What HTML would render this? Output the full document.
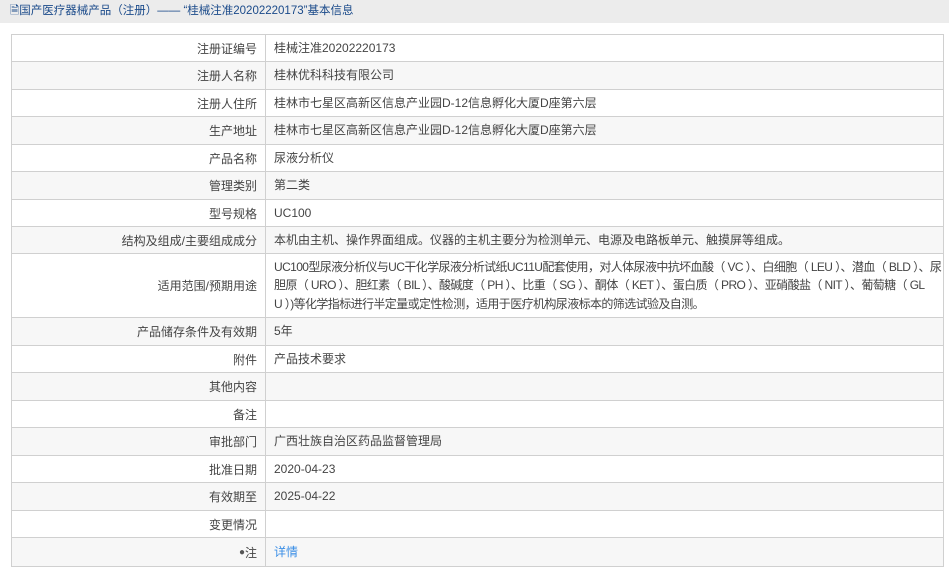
<!DOCTYPE html>
<html><head><meta charset="utf-8"><style>
body{margin:0;background:#fff;font-family:"Liberation Sans","Noto Sans CJK SC",sans-serif;font-size:12px;color:#333;width:949px;height:573px;overflow:hidden}
.hd{height:23px;background:#ececec;line-height:22px;padding-left:10px;color:#1a4a8a;font-size:11.5px}
.g{position:absolute;left:11px;top:34px;width:931px;border:1px solid #d0d0d0;border-bottom:none}
.r{display:flex;border-bottom:1px solid #d0d0d0;box-sizing:border-box}
.r:nth-child(even){background:#f7f7f7}
.l{width:254px;flex:0 0 254px;border-right:1px solid #d0d0d0;text-align:right;padding-right:8px;box-sizing:border-box;display:flex;align-items:center;justify-content:flex-end;color:#444}
.v{padding-left:8px;display:flex;align-items:center;color:#444;line-height:18.5px;padding-right:4px;white-space:nowrap;overflow:hidden}
</style></head><body>
<div class="hd">🗎国产医疗器械产品（注册）—— “桂械注准20202220173”基本信息</div>
<div class="g">
<div class="r" style="height:27px"><div class="l">注册证编号</div><div class="v">桂械注准20202220173</div></div>
<div class="r" style="height:28px"><div class="l">注册人名称</div><div class="v">桂林优科科技有限公司</div></div>
<div class="r" style="height:27px"><div class="l">注册人住所</div><div class="v">桂林市七星区高新区信息产业园D-12信息孵化大厦D座第六层</div></div>
<div class="r" style="height:28px"><div class="l">生产地址</div><div class="v">桂林市七星区高新区信息产业园D-12信息孵化大厦D座第六层</div></div>
<div class="r" style="height:27px"><div class="l">产品名称</div><div class="v">尿液分析仪</div></div>
<div class="r" style="height:28px"><div class="l">管理类别</div><div class="v">第二类</div></div>
<div class="r" style="height:27px"><div class="l">型号规格</div><div class="v">UC100</div></div>
<div class="r" style="height:27px"><div class="l">结构及组成/主要组成成分</div><div class="v">本机由主机、操作界面组成。仪器的主机主要分为检测单元、电源及电路板单元、触摸屏等组成。</div></div>
<div class="r" style="height:64px"><div class="l">适用范围/预期用途</div><div class="v" style="letter-spacing:-0.6px">UC100型尿液分析仪与UC干化学尿液分析试纸UC11U配套使用，对人体尿液中抗坏血酸（ VC ）、白细胞（ LEU ）、潜血（ BLD ）、尿<br>胆原（ URO ）、胆红素（ BIL ）、酸碱度（ PH ）、比重（ SG ）、酮体（ KET ）、蛋白质（ PRO ）、亚硝酸盐（ NIT ）、葡萄糖（ GL<br>U ）)等化学指标进行半定量或定性检测，适用于医疗机构尿液标本的筛选试验及自测。</div></div>
<div class="r" style="height:28px"><div class="l">产品储存条件及有效期</div><div class="v">5年</div></div>
<div class="r" style="height:27px"><div class="l">附件</div><div class="v">产品技术要求</div></div>
<div class="r" style="height:28px"><div class="l">其他内容</div><div class="v"></div></div>
<div class="r" style="height:27px"><div class="l">备注</div><div class="v"></div></div>
<div class="r" style="height:28px"><div class="l">审批部门</div><div class="v">广西壮族自治区药品监督管理局</div></div>
<div class="r" style="height:27px"><div class="l">批准日期</div><div class="v">2020-04-23</div></div>
<div class="r" style="height:28px"><div class="l">有效期至</div><div class="v">2025-04-22</div></div>
<div class="r" style="height:27px"><div class="l">变更情况</div><div class="v"></div></div>
<div class="r" style="height:29px"><div class="l"><span style="font-size:10px;color:#555">●</span>注</div><div class="v" style="color:#3a8ee6">详情</div></div>
</div>
</body></html>
